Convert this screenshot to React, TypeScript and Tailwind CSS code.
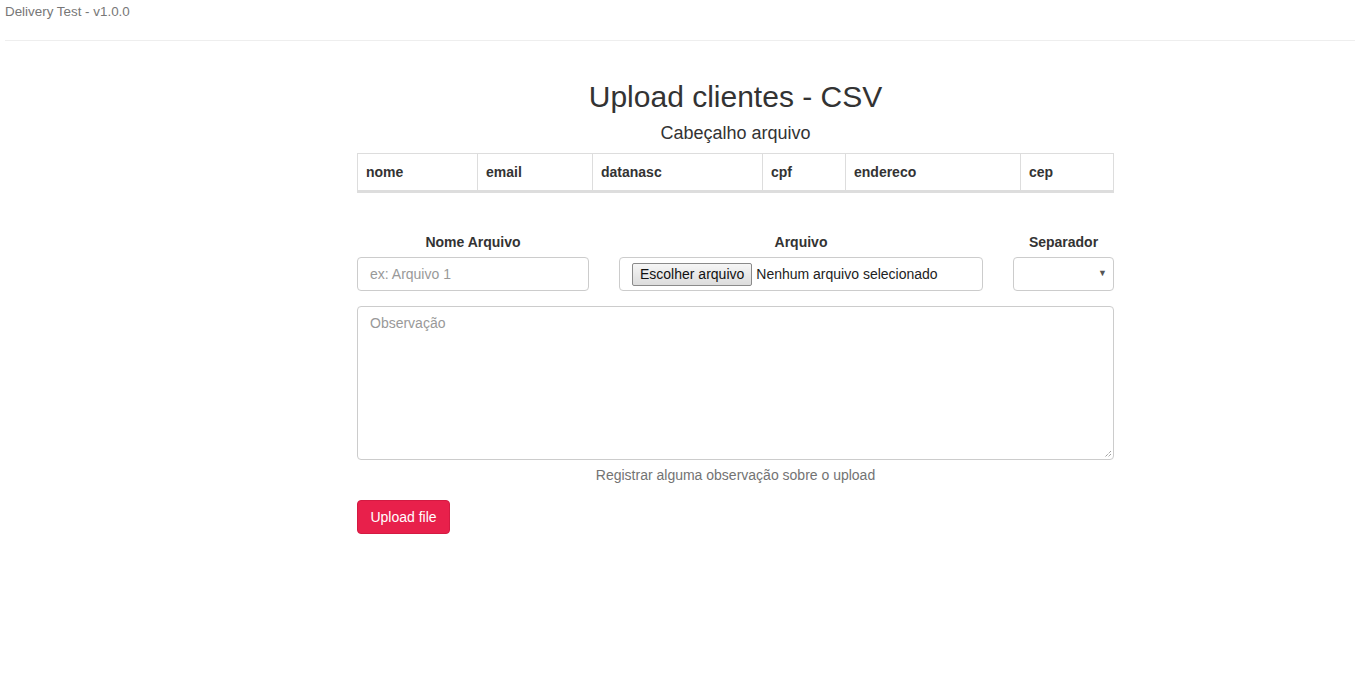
import React from 'react';

const headers = [
  { name: 'nome', w: 'w-[119px]' },
  { name: 'email', w: 'w-[115px]' },
  { name: 'datanasc', w: 'w-[170px]' },
  { name: 'cpf', w: 'w-[83px]' },
  { name: 'endereco', w: 'w-[175px]' },
  { name: 'cep', w: 'w-[93px]' },
];

const App = () => {
  return (
    <div className="min-h-screen bg-white text-[#333] text-[14px] font-['Liberation_Sans',Arial,sans-serif]">
      {/* Top bar */}
      <div className="px-[5px] pt-[4px]">
        <div className="text-[13.4px] leading-[16px] text-[#777]">Delivery Test - v1.0.0</div>
        <div className="mt-[20px] border-t border-[#eee] mr-[5px]" />
      </div>

      <div className="w-[757px] ml-[357px]">
        <h1 className="mt-[39px] text-center text-[30px] leading-[33px] font-normal">Upload clientes - CSV</h1>
        <h4 className="mt-[10px] text-center text-[18px] leading-[20px]">Cabeçalho arquivo</h4>

        {/* Header table */}
        <div className="mt-[10px] flex border border-[#ddd]">
          {headers.map((h, i) => (
            <div
              key={h.name}
              className={`${h.w} ${i > 0 ? 'border-l border-[#ddd]' : ''} border-b-2 border-b-[#ddd] px-[8px] py-[9px] font-bold leading-[18px]`}
            >
              {h.name}
            </div>
          ))}
        </div>

        {/* Form row */}
        <div className="mt-[39px] flex gap-[30px]">
          <div className="w-[232px] flex flex-col items-stretch">
            <label className="text-center font-bold leading-[20px] mb-[5px]">Nome Arquivo</label>
            <div className="h-[34px] border border-[#ccc] rounded-[4px] px-[12px] flex items-center text-[#999]">
              ex: Arquivo 1
            </div>
          </div>
          <div className="w-[364px] flex flex-col">
            <label className="text-center font-bold leading-[20px] mb-[5px]">Arquivo</label>
            <div className="h-[34px] border border-[#ccc] rounded-[4px] pl-[12px] flex items-center text-[#333]">
              <span className="h-[23px] px-[7px] flex items-center border border-[#8a8a8a] rounded-[2px] bg-gradient-to-b from-[#f6f6f6] to-[#dcdcdc] text-[14px] text-[#111]">
                Escolher arquivo
              </span>
              <span className="ml-[4px] text-[14px] text-[#222]">Nenhum arquivo selecionado</span>
            </div>
          </div>
          <div className="w-[101px] flex flex-col">
            <label className="text-center font-bold leading-[20px] mb-[5px]">Separador</label>
            <div className="h-[34px] border border-[#ccc] rounded-[4px] flex items-center justify-end pr-[6px]">
              <span className="text-[9px] text-[#555]">▼</span>
            </div>
          </div>
        </div>

        {/* Textarea */}
        <div className="mt-[15px] relative h-[154px] border border-[#ccc] rounded-[4px] px-[12px] py-[6px] text-[#999] leading-[20px]">
          Observação
          <svg className="absolute right-[1px] bottom-[1px]" width="10" height="10" viewBox="0 0 10 10">
            <path d="M9 3 L3 9 M9 6 L6 9" stroke="#777" strokeWidth="1" strokeDasharray="1 1" />
          </svg>
        </div>
        <p className="mt-[5px] text-center text-[#737373] leading-[20px]">Registrar alguma observação sobre o upload</p>

        <button className="mt-[15px] h-[34px] w-[93px] rounded-[4px] bg-[#e8204b] border border-[#d41a42] text-white text-[14px]">
          Upload file
        </button>
      </div>
    </div>
  );
};

export default App;
